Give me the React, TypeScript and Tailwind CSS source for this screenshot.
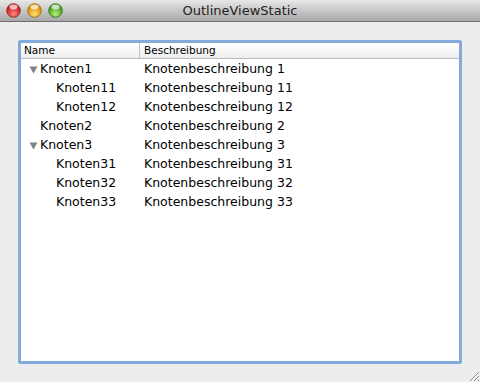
import React from 'react';

type Row = { name: string; desc: string; level: number; open?: boolean };

const rows: Row[] = [
  { name: 'Knoten1', desc: 'Knotenbeschreibung 1', level: 0, open: true },
  { name: 'Knoten11', desc: 'Knotenbeschreibung 11', level: 1 },
  { name: 'Knoten12', desc: 'Knotenbeschreibung 12', level: 1 },
  { name: 'Knoten2', desc: 'Knotenbeschreibung 2', level: 0 },
  { name: 'Knoten3', desc: 'Knotenbeschreibung 3', level: 0, open: true },
  { name: 'Knoten31', desc: 'Knotenbeschreibung 31', level: 1 },
  { name: 'Knoten32', desc: 'Knotenbeschreibung 32', level: 1 },
  { name: 'Knoten33', desc: 'Knotenbeschreibung 33', level: 1 },
];

function Light({ from, to, ring }: { from: string; to: string; ring: string }) {
  return (
    <svg width="15" height="15" viewBox="0 0 15 15">
      <defs>
        <radialGradient id={`g${from}`} cx="50%" cy="75%" r="60%">
          <stop offset="0%" stopColor={to} />
          <stop offset="100%" stopColor={from} />
        </radialGradient>
      </defs>
      <circle cx="7.5" cy="7.5" r="6.8" fill={`url(#g${from})`} stroke={ring} strokeWidth="0.8" />
      <ellipse cx="7.5" cy="4" rx="4" ry="2.4" fill="white" opacity="0.7" />
    </svg>
  );
}

export default function App() {
  return (
    <div
      className="relative w-[480px] h-[382px] bg-[#ededed] flex flex-col overflow-hidden"
      style={{ fontFamily: '"DejaVu Sans", "Liberation Sans", sans-serif' }}
    >
      {/* Title bar */}
      <div className="h-[22px] shrink-0 bg-gradient-to-b from-[#e8e8e8] to-[#a8a8a8] border-b border-[#6e6e6e] flex items-center relative">
        <div className="flex items-center gap-[6px] pl-[6px]">
          <Light from="#c8141a" to="#ff8a80" ring="#8a1c1c" />
          <Light from="#d98a00" to="#ffe070" ring="#9a6400" />
          <Light from="#3d9a18" to="#b8f080" ring="#2f6e16" />
        </div>
        <div className="absolute inset-0 flex items-center justify-center text-[13px] text-[#222] pointer-events-none">
          OutlineViewStatic
        </div>
      </div>

      {/* Content */}
      <div className="flex-1 pt-[18px] pl-[18px] pr-[18px] pb-[18px]">
        <div className="h-[324px] w-[444px] rounded-[2px] border-[3px] border-[#84aad9] bg-white flex flex-col">
          <div className="flex h-[16px] text-[10.5px] text-black bg-gradient-to-b from-white to-[#eeeeee] border-b border-[#bdbdbd]">
            <div className="w-[119px] pl-[3px] border-r border-[#c0c0c0] flex items-center">Name</div>
            <div className="flex-1 pl-[4px] flex items-center">Beschreibung</div>
          </div>
          <div className="pt-[1px]">
            {rows.map((r) => (
              <div key={r.name} className="flex h-[19px] items-center text-[12.5px] text-black">
                <div className="w-[120px] flex items-center" style={{ paddingLeft: r.level === 0 ? 8 : 35 }}>
                  {r.level === 0 && (
                    <span className="w-[11px] flex items-center">
                      {r.open && (
                        <svg width="9" height="8" viewBox="0 0 9 8">
                          <path d="M0.5 0.5 L8.5 0.5 L4.5 7.5 Z" fill="#808080" />
                        </svg>
                      )}
                    </span>
                  )}
                  <span>{r.name}</span>
                </div>
                <div className="pl-[3px]">{r.desc}</div>
              </div>
            ))}
          </div>
        </div>
      </div>

      {/* resize grip */}
      <div className="absolute left-[466px] top-[368px]">
        <svg width="14" height="14" viewBox="0 0 14 14">
          <path d="M13 4 L4 13 M13 8 L8 13 M13 12 L12 13" stroke="#888" strokeWidth="1" />
          <path d="M13 5 L5 13 M13 9 L9 13" stroke="#fff" strokeWidth="1" />
        </svg>
      </div>
    </div>
  );
}
